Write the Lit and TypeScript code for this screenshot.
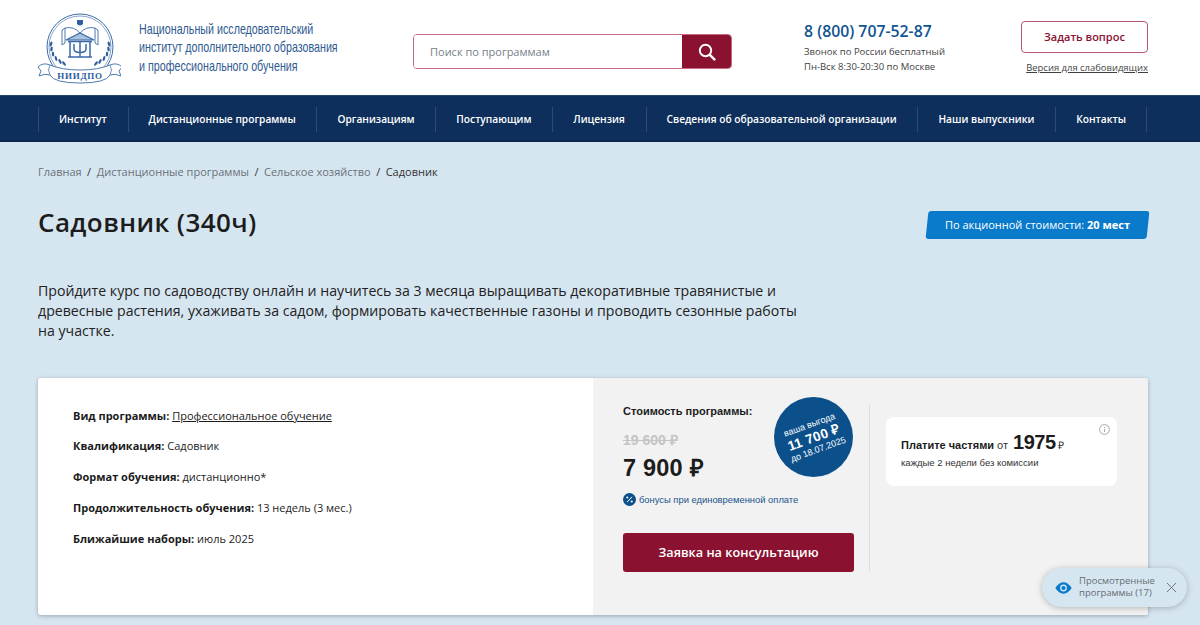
import { LitElement, html, css, svg } from "lit";
import { customElement } from "lit/decorators.js";

const navItems = ["Институт","Дистанционные программы","Организациям","Поступающим","Лицензия","Сведения об образовательной организации","Наши выпускники","Контакты"];

const leaves = (side: number) => {
  const pts = [[14,32],[14.5,37],[16,42],[19,46.500],[23,49.500],[27,51.500]];
  return pts.map(([x, y], i) => {
    const px = side < 0 ? x : 86 - x;
    const rot = side * (i * 12 - 20);
    return svg`<ellipse cx=${px} cy=${y} rx="1.200" ry="2.600" fill="#2f5f9e" stroke="none" transform="rotate(${rot} ${px} ${y})"/>`;
  });
};

const logo = svg`<svg class="logo" viewBox="0 0 84 72" width="84" height="72" fill="none" stroke="#3a6aa6">
  <circle cx="43" cy="35" r="33" stroke-width="1"/>
  <circle cx="43" cy="35" r="31" stroke-width=".6"/>
  <path d="M25 18v15M61 18v15M28 16v15M58 16v15" stroke-width=".9"/>
  <path d="M28 16q9-2 15 5q6-7 15-5M25 33l3-2M61 33l-3-2M25 18l3-2M61 18l-3-2" stroke-width=".9"/>
  <path d="M29 28l14-7l14 7z" fill="#a9c0dc" stroke-width="1.200"/>
  <path d="M31 29.500h24M31 45h24" stroke-width="1.400"/>
  <path d="M33 30v15M53 30v15M43 30v15M37 32v5q0 3.500 6 3.500t6-3.500v-5" stroke-width="1.500"/>
  <path d="M40 8h6v4q-3 3-6 0z" fill="#2f5f9e" stroke="none"/>
  ${leaves(-1)}
  ${leaves(1)}
  <path d="M1 55q5-5 12-2q12 5 30 5t30-5q7-3 12 2l-3 4l2 5q-6-3-11-1q-4 8-30 8t-30-8q-5-2-11 1l2-5z" fill="#fff" stroke-width=".9"/>
  <path d="M13 53q-3 5 0 10M73 53q3 5 0 10" stroke-width=".7"/>
  <text x="43" y="67" text-anchor="middle" class="logot">НИИДПО</text>
</svg>`;

@customElement("app-root")
export class AppRoot extends LitElement {
  static styles = css`
    :host { display: block; position: relative; height: 625px; overflow: hidden; background: #d6e6f1; font-family: "Open Sans", sans-serif; color: #1c1c1c; }
    * { box-sizing: border-box; }
    .top { height: 95px; background: #fff; padding: 0 52px 0 37px; display: flex; align-items: center; }
    .brand { display: flex; align-items: center; width: 376px; gap: 18px; }
    .logo { flex: none; }
    .logot { font: bold 9px "Liberation Serif", serif; fill: #2f5f9e; stroke: none; letter-spacing: .7px; }
    .brand-text { font-family: "Liberation Sans", sans-serif; font-size: 14.5px; line-height: 18.5px; color: #2f5a92; white-space: nowrap; transform: scaleX(.738); transform-origin: left center; }
    .search { margin-top: 8px; width: 319px; height: 35px; display: flex; border: 1px solid #c76a80; border-radius: 4px; overflow: hidden; }
    .search-in { flex: 1; padding-left: 16px; font-size: 11px; line-height: 33px; color: #777f87; background: #fff; }
    .search-btn { width: 49px; background: #8a1230; display: flex; align-items: center; justify-content: center; }
    .phone { margin: 0 0 2px 72px; width: 217px; }
    .tel { font-size: 15.800px; color: #0f5493; line-height: 24px; font-weight: 600; }
    .hours { margin-top: 2px; font-size: 9.500px; line-height: 14.500px; color: #3f3f3f; }
    .right { width: 127px; display: flex; flex-direction: column; align-items: stretch; }
    .ask { height: 32px; border: 1px solid #b8566f; border-radius: 4px; text-align: center; line-height: 30px; font-size: 11px; font-weight: 600; color: #8a1230; }
    .lowvis { margin-top: 8px; text-align: right; font-size: 9.450px; line-height: 14px; color: #3f3f3f; text-decoration: underline; white-space: nowrap; }
    nav { height: 47px; background: #0e2f5c; padding: 11px 53px 0 38px; display: flex; justify-content: space-between; border-top: 1px solid #24446f; border-bottom: 2px solid #0a2750; }
    nav a { flex: none; border-left: 1px solid #2b4a75; padding: 0 20px; color: #fff; font-size: 10.200px; font-weight: 600; line-height: 24px; height: 25px; white-space: nowrap; }
    nav a:last-child { border-right: 1px solid #2b4a75; }
    main { padding: 22px 52px 0 38px; }
    .crumbs { font-size: 11px; line-height: 16px; color: #6b7178; display: flex; gap: 5.500px; }
    .crumbs b { font-weight: 400; color: #333; }
    .crumbs i { font-style: normal; color: #333; }
    .headrow { display: flex; justify-content: space-between; margin-top: 20px; height: 54px; }
    h1 { margin: 0; font-size: 26px; font-weight: 600; line-height: 44px; color: #1c1c1c; letter-spacing: .4px; }
    .promo { margin-top: 11px; height: 28px; width: 221px; background: #0a7acb; color: #fff; font-size: 11px; line-height: 28px; text-align: center; border-radius: 3px; transform: skewX(-6deg); }
    .promo span { display: block; transform: skewX(6deg); }
    .promo b { font-weight: 700; }
    .lead { margin: 27px 0 0; width: 775px; font-size: 14.150px; line-height: 20px; color: #222; }
    .card { margin-top: 37px; height: 237px; display: flex; background: #fff; border-radius: 3px; box-shadow: 0 1px 4px rgba(0,0,0,.28); overflow: hidden; }
    .info { width: 555px; padding: 28.500px 35px; font-size: 11px; }
    .info p { margin: 0 0 12.750px; line-height: 18px; }
    .info b { font-weight: 700; }
    .info u { text-decoration: underline; }
    .side { flex: 1; background: #f2f2f2; padding: 26px 0 0 30px; display: flex; }
    .price { width: 247px; border-right: 1px solid #dedede; height: 168px; font-family: "Liberation Sans", sans-serif; }
    .ptitle { font-size: 11px; font-weight: 700; line-height: 14px; color: #1c1c1c; }
    .old { margin-top: 13px; font-size: 14px; font-weight: 700; line-height: 18px; color: #c4c4c4; text-decoration: line-through; }
    .new { margin-top: 3px; font-size: 23.500px; font-weight: 700; line-height: 32px; color: #1c1c1c; letter-spacing: .2px; }
    .bonus { margin-top: 9px; display: flex; align-items: center; gap: 3px; font-size: 9.400px; line-height: 13px; color: #21548a; }
    .cta { margin-top: 27px; width: 231px; height: 39px; background: #8a1230; border-radius: 3px; color: #fff; font-family: "Open Sans", sans-serif; font-size: 12.700px; font-weight: 600; line-height: 39px; text-align: center; }
    .parts { position: relative; margin: 13px 0 0 16px; width: 231px; height: 69px; background: #fff; border-radius: 8px; padding: 12px 0 0 15px; font-family: "Liberation Sans", sans-serif; }
    .pline { font-size: 11px; line-height: 26px; display: flex; align-items: baseline; color: #333; white-space: pre; }
    .pline b { color: #1c1c1c; }
    .pline .sum { font-size: 20px; font-weight: 700; color: #1c1c1c; margin: 0 2px 0 2px; letter-spacing: -.5px; }
    .pline .cur { font-size: 10.500px; }
    .psub { font-size: 9.500px; line-height: 12px; margin-top: -1px; color: #333; }
    .iinfo { position: absolute; top: 7px; right: 7px; }
    .badge { position: absolute; left: 774px; top: 397px; width: 79px; height: 80px; border-radius: 50%; background: #0b4f8b; color: #fff; font-family: "Liberation Sans", sans-serif; display: flex; align-items: center; justify-content: center; }
    .badge-in { transform: rotate(-20deg); text-align: center; }
    .b1 { font-size: 9px; line-height: 13px; }
    .b2 { font-size: 13.500px; font-weight: 700; line-height: 13px; letter-spacing: .3px; }
    .b3 { font-size: 9px; line-height: 13px; }
    .viewed { position: absolute; left: 1042px; top: 568px; width: 145px; height: 39px; border-radius: 20px; background: #d6e6f1; box-shadow: 0 1px 6px rgba(0,0,0,.25); display: flex; align-items: center; padding-left: 13px; font-size: 9.500px; line-height: 12.500px; color: #666d74; }
    .viewed span { margin-left: 7px; width: 87px; margin-top: -1px; }
  `;

  render() {
    return html`
      <div class="top">
        <div class="brand">
          ${logo}
          <div class="brand-text">Национальный исследовательский<br>институт дополнительного образования<br>и профессионального обучения</div>
        </div>
        <div class="search">
          <div class="search-in">Поиск по программам</div>
          <div class="search-btn"><svg width="18" height="18" viewBox="0 0 18 18" fill="none" stroke="#fff"><circle cx="7.500" cy="7.500" r="5.700" stroke-width="1.900"/><path d="M11.800 11.800l4.600 4.600" stroke-width="2.400" stroke-linecap="round"/></svg></div>
        </div>
        <div class="phone">
          <div class="tel">8 (800) 707-52-87</div>
          <div class="hours">Звонок по России бесплатный<br>Пн-Вск 8:30-20:30 по Москве</div>
        </div>
        <div class="right">
          <div class="ask">Задать вопрос</div>
          <div class="lowvis">Версия для слабовидящих</div>
        </div>
      </div>
      <nav>${navItems.map((n) => html`<a>${n}</a>`)}</nav>
      <main>
        <div class="crumbs"><span>Главная</span><i>/</i><span>Дистанционные программы</span><i>/</i><span>Сельское хозяйство</span><i>/</i><b>Садовник</b></div>
        <div class="headrow">
          <h1>Садовник (340ч)</h1>
          <div class="promo"><span>По акционной стоимости: <b>20 мест</b></span></div>
        </div>
        <p class="lead">Пройдите курс по садоводству онлайн и научитесь за 3 месяца выращивать декоративные травянистые и древесные растения, ухаживать за садом, формировать качественные газоны и проводить сезонные работы на участке.</p>
        <div class="card">
          <div class="info">
            <p><b>Вид программы:</b> <u>Профессиональное обучение</u></p>
            <p><b>Квалификация:</b> Садовник</p>
            <p><b>Формат обучения:</b> дистанционно*</p>
            <p><b>Продолжительность обучения:</b> 13 недель (3 мес.)</p>
            <p><b>Ближайшие наборы:</b> июль 2025</p>
          </div>
          <div class="side">
            <div class="price">
              <div class="ptitle">Стоимость программы:</div>
              <div class="old">19 600 ₽</div>
              <div class="new">7 900 ₽</div>
              <div class="bonus"><svg width="13" height="13" viewBox="0 0 13 13"><circle cx="6.500" cy="6.500" r="6.500" fill="#0b4f8b"/><path d="M4 9.200L9 3.800" stroke="#fff" stroke-width="1"/><circle cx="4.300" cy="4.500" r="1.100" fill="#fff"/><circle cx="8.700" cy="8.500" r="1.100" fill="#fff"/></svg>бонусы при единовременной оплате</div>
              <div class="cta">Заявка на консультацию</div>
            </div>
            <div class="parts">
              <div class="pline"><b>Платите частями</b> от <span class="sum">1975</span><span class="cur">₽</span></div>
              <div class="psub">каждые 2 недели без комиссии</div>
              <svg class="iinfo" width="11" height="11" viewBox="0 0 11 11" fill="none" stroke="#a8a8a8"><circle cx="5.500" cy="5.500" r="4.900"/><path d="M5.500 5v3M5.500 3v1"/></svg>
            </div>
          </div>
        </div>
      </main>
      <div class="badge">
        <div class="badge-in">
          <div class="b1">ваша выгода</div>
          <div class="b2">11 700 ₽</div>
          <div class="b3">до 18.07.2025</div>
        </div>
      </div>
      <div class="viewed">
        <svg width="17" height="12" viewBox="0 0 17 12"><path d="M.3 6Q4 .3 8.500 .3T16.700 6Q13 11.700 8.500 11.700T.3 6z" fill="#0a7acb"/><circle cx="8.500" cy="6" r="3.400" fill="#d6e6f1"/><circle cx="8.500" cy="6" r="2.100" fill="#0a7acb"/></svg>
        <span>Просмотренные программы (17)</span>
        <svg width="11" height="11" viewBox="0 0 11 11" fill="none" stroke="#667" stroke-width=".9"><path d="M1 1l9 9M10 1l-9 9"/></svg>
      </div>
    `;
  }
}
